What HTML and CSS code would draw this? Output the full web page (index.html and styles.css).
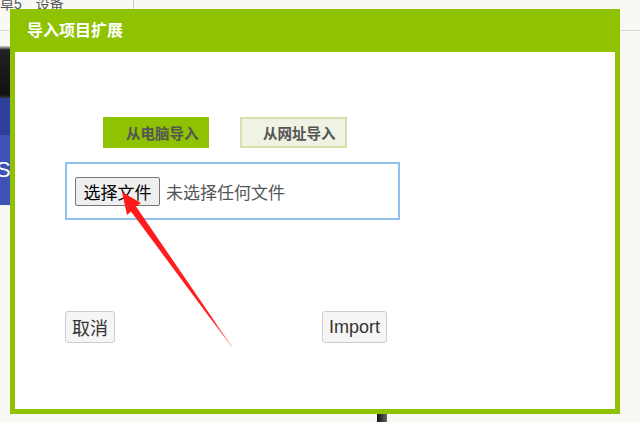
FILE: index.html
```html
<!DOCTYPE html>
<html lang="zh-CN">
<head>
  <meta charset="UTF-8" />
  <meta name="viewport" content="width=device-width, initial-scale=1.0"/>
  <title>导入项目扩展</title>
  <link rel="stylesheet" href="styles.css">
</head>
<body>
<div class="page">
  <div class="page-top">
    <span class="page-top-text">卓5　设备</span>
    <span class="page-top-sep"></span>
  </div>
  <div class="page-side">
    <div class="side-dark"></div>
    <div class="side-blue"></div>
    <div class="side-blue light">S</div>
  </div>
  <div class="page-bottom-mark"></div>
</div>

<div class="dialog">
  <div class="dialog-title">导入项目扩展</div>
  <div class="dialog-body">
    <div class="tabs">
      <div class="tab active">从电脑导入</div>
      <div class="tab">从网址导入</div>
    </div>
    <div class="file-box">
      <button class="file-btn">选择文件</button>
      <span class="file-name">未选择任何文件</span>
    </div>
    <div class="actions">
      <button class="action-btn">取消</button>
      <button class="action-btn">Import</button>
    </div>
  </div>
</div>

<svg class="arrow" width="640" height="422" viewBox="0 0 640 422">
  <defs>
    <linearGradient id="fade" x1="122" y1="193" x2="232" y2="347" gradientUnits="userSpaceOnUse">
      <stop offset="0" stop-color="#ff1a1a"/>
      <stop offset="0.8" stop-color="#ff2020"/>
      <stop offset="1" stop-color="#ffb0b0"/>
    </linearGradient>
  </defs>
  <polygon fill="url(#fade)" points="122,192 141,203 136,206.5 232.3,347 231.7,347.3 131,211.5 127,215"/>
</svg>
</body>
</html>
```

FILE: styles.css
```css
body {
  margin: 0;
  background-color: #f8f8f4;
  font-family: "Liberation Sans", "Noto Sans CJK SC", sans-serif;
  width: 640px;
  height: 422px;
  overflow: hidden;
  position: relative;
}

.page-top {
  height: 30px;
  border-bottom: 1px solid #d8d8d8;
  display: flex;
  align-items: flex-start;
}

.page-top-text {
  font-size: 14px;
  color: #555;
  line-height: 14px;
  margin-top: -3px;
  width: 133px;
}

.page-top-sep {
  width: 1px;
  height: 10px;
  background-color: #ccc;
}

.page-side {
  width: 10px;
  margin-top: 15px;
}

.side-dark {
  height: 52px;
  background: linear-gradient(#cfcfcf 0, #222 4px, #111 48px, #333 52px);
}

.side-blue {
  height: 37px;
  background-color: #2f3f9f;
}

.side-blue.light {
  height: 70px;
  background-color: #3e51b7;
  color: #fff;
  font-size: 22px;
  line-height: 70px;
  text-indent: -4px;
  overflow: hidden;
}

.page-bottom-mark {
  position: absolute;
  left: 377px;
  top: 414px;
  width: 10px;
  height: 8px;
  background: linear-gradient(90deg, #111, #666);
}

.dialog {
  position: absolute;
  left: 10px;
  top: 9px;
  width: 600px;
  height: 400px;
  padding: 0 5px 5px 5px;
  background-color: #8fc200;
  display: flex;
  flex-direction: column;
}

.dialog-title {
  height: 43px;
  line-height: 43px;
  padding-left: 12px;
  color: #fff;
  font-weight: bold;
  font-size: 16px;
}

.dialog-body {
  flex: 1;
  background-color: #fff;
  padding: 65px 0 0 50px;
}

.tabs {
  display: flex;
  gap: 31px;
  margin-left: 38px;
}

.tab {
  height: 31px;
  width: 107px;
  box-sizing: border-box;
  padding: 0 0 0 21px;
  display: flex;
  align-items: center;
  font-size: 14.5px;
  font-weight: bold;
  color: #555;
  background-color: #eff3e3;
  border: 2px solid #d5e1a9;
}

.tab.active {
  width: 106px;
  background-color: #8fc200;
  border-color: #8fc200;
}

.file-box {
  margin-top: 14px;
  width: 335px;
  height: 58px;
  box-sizing: border-box;
  border: 2px solid #93c1ee;
  display: flex;
  align-items: center;
  padding-left: 8px;
}

.file-btn {
  height: 29px;
  width: 85px;
  padding: 0;
  font-family: "Noto Sans CJK SC", sans-serif;
  font-size: 17px;
  color: #000;
  background-color: #efefef;
  border: 1px solid #767676;
  border-radius: 2px;
}

.file-name {
  margin-left: 6px;
  font-family: "Noto Sans CJK SC", sans-serif;
  font-size: 17px;
  color: #555;
}

.actions {
  margin-top: 91px;
  width: 322px;
  display: flex;
  justify-content: space-between;
}

.action-btn {
  height: 32px;
  padding: 0 6px;
  font-family: "Liberation Sans", "Noto Sans CJK SC", sans-serif;
  font-size: 18px;
  color: #333;
  background-color: #f5f5f5;
  border: 1px solid #cdcdcd;
  border-radius: 3px;
}

.arrow {
  position: absolute;
  left: 0;
  top: 0;
  pointer-events: none;
}
```
